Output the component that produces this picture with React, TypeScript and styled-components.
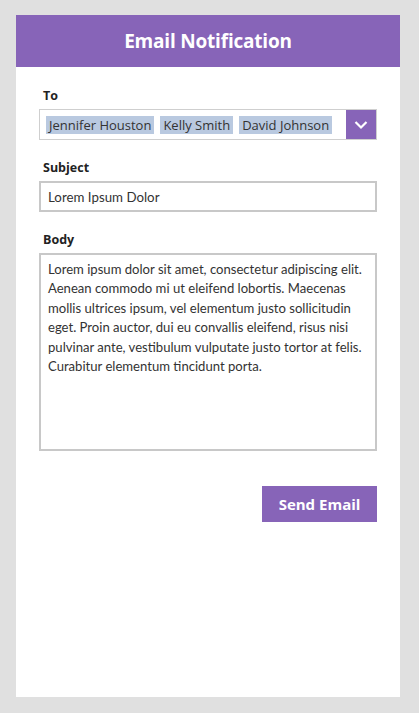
import React from "react";
import styled, { createGlobalStyle } from "styled-components";

const Global = createGlobalStyle`
  html, body { margin: 0; padding: 0; background: #e0e0e0; }
  body { font-family: "Open Sans", "Noto Sans", sans-serif; }
  * { box-sizing: border-box; }
`;

const Page = styled.div`
  padding: 15px 19px 16px 16px;
  min-height: 713px;
`;

const Card = styled.div`
  width: 384px;
  height: 682px;
  background: #ffffff;
  display: flex;
  flex-direction: column;
`;

const Header = styled.div`
  height: 52px;
  background: #8764b8;
  display: flex;
  align-items: center;
  justify-content: center;
`;

const Title = styled.h1`
  margin: 0;
  color: #ffffff;
  font-size: 19px;
  font-weight: 700;
  letter-spacing: -0.2px;
`;

const Form = styled.div`
  padding: 20px 23px 0 23px;
  display: flex;
  flex-direction: column;
  gap: 19px;
`;

const Field = styled.div`
  display: flex;
  flex-direction: column;
  gap: 4px;
`;

const Label = styled.label`
  display: block;
  height: 18px;
  line-height: 18px;
  padding-left: 4px;
  font-size: 12.5px;
  font-weight: 700;
  color: #222;
`;

const Box = styled.div<{ $h: number }>`
  height: ${(p) => p.$h}px;
  border: 2px solid #c8c8c8;
  background: #fff;
  color: #333;
  font-size: 13px;
`;

const Picker = styled(Box)`
  display: flex;
  align-items: center;
  border-width: 1.5px;
  border-color: #cfcfcf;
  padding-left: 6px;
  gap: 6px;
`;

const Chip = styled.span`
  background: #b9c9e0;
  height: 18px;
  line-height: 18px;
  padding: 0 3px;
  font-size: 13px;
  color: #333;
  white-space: nowrap;
`;

const DropButton = styled.div`
  margin-left: auto;
  width: 30px;
  height: 100%;
  background: #8764b8;
  display: flex;
  align-items: center;
  justify-content: center;
`;

const InputText = styled.div`
  padding: 5px 0 0 7px;
  line-height: 19px;
  font-family: "Lato", sans-serif;
  font-size: 13.3px;
`;

const BodyText = styled.div`
  padding: 5px 6px 0 7px;
  line-height: 19.4px;
  font-family: "Lato", sans-serif;
  font-size: 13.1px;
`;

const Actions = styled.div`
  display: flex;
  justify-content: flex-end;
  margin-top: 16px;
`;

const SendButton = styled.button`
  width: 115px;
  height: 36px;
  border: none;
  background: #8764b8;
  color: #fff;
  font-family: inherit;
  font-size: 15px;
  font-weight: 700;
  cursor: pointer;
`;

export default function App() {
  return (
    <>
      <Global />
      <Page>
        <Card>
          <Header>
            <Title>Email Notification</Title>
          </Header>
          <Form>
            <Field>
              <Label>To</Label>
              <Picker $h={31}>
                <Chip>Jennifer Houston</Chip>
                <Chip>Kelly Smith</Chip>
                <Chip>David Johnson</Chip>
                <DropButton>
                  <svg width="14" height="10" viewBox="0 0 14 10">
                    <path d="M1.5 2 L7 7.5 L12.5 2" fill="none" stroke="#fff" strokeWidth="2.2" />
                  </svg>
                </DropButton>
              </Picker>
            </Field>
            <Field>
              <Label>Subject</Label>
              <Box $h={31}>
                <InputText>Lorem Ipsum Dolor</InputText>
              </Box>
            </Field>
            <Field>
              <Label>Body</Label>
              <Box $h={198}>
                <BodyText>
                  Lorem ipsum dolor sit amet, consectetur adipiscing elit. Aenean commodo mi ut eleifend lobortis. Maecenas mollis ultrices ipsum, vel elementum justo sollicitudin eget. Proin auctor, dui eu convallis eleifend, risus nisi pulvinar ante, vestibulum vulputate justo tortor at felis. Curabitur elementum tincidunt porta.
                </BodyText>
              </Box>
            </Field>
            <Actions>
              <SendButton>Send Email</SendButton>
            </Actions>
          </Form>
        </Card>
      </Page>
    </>
  );
}
